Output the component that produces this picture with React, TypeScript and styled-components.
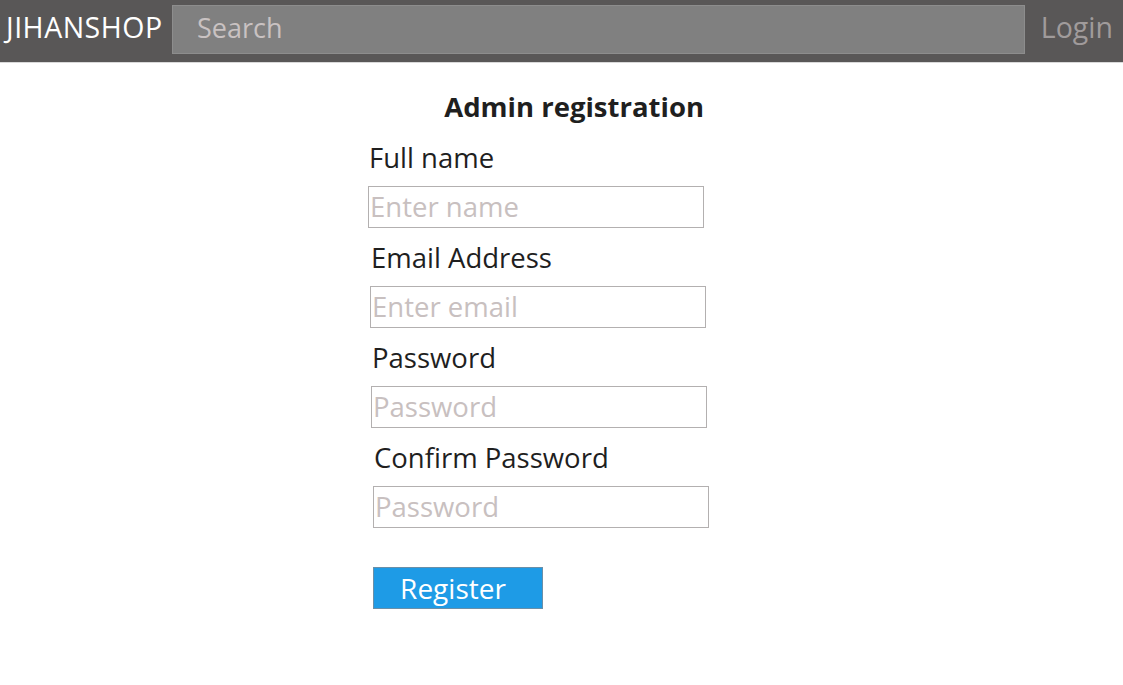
import React from "react";
import styled, { createGlobalStyle } from "styled-components";

const Global = createGlobalStyle`
  html, body { margin: 0; padding: 0; background: #fff; }
  body { font-family: "Open Sans", "Noto Sans", sans-serif; }
  * { box-sizing: border-box; }
`;

const Header = styled.header`
  display: flex;
  align-items: flex-start;
  height: 63px;
  background: #595757;
  border-bottom: 1px solid #d9d9d9;
  padding: 5px 10px 0 6px;
`;

const Logo = styled.div`
  color: #ffffff;
  font-size: 28.5px;
  line-height: 44px;
  letter-spacing: 0.5px;
  width: 166px;
  flex: none;
`;

const SearchBox = styled.input`
  flex: 1;
  height: 49px;
  background: #808080;
  border: 1px solid #8d8d8d;
  padding: 0 24px 5px;
  font-family: inherit;
  font-size: 27px;
  color: #eee;
  outline: none;
  &::placeholder { color: #c9c2c2; }
`;

const LoginLink = styled.div`
  color: #a09b9b;
  font-size: 28.5px;
  line-height: 44px;
  margin-left: 16px;
  flex: none;
`;

const Main = styled.main`
  display: flex;
  flex-direction: column;
  width: 342px;
  margin: 24px 0 0 368px;
`;

const Title = styled.h1`
  margin: 0 0 11px;
  width: 336px;
  text-align: right;
  font-size: 27.5px;
  line-height: 40px;
  font-weight: 700;
  color: #1f1f1f;
`;

const Group = styled.div<{ $shift: number }>`
  display: flex;
  flex-direction: column;
  margin-left: ${(p) => p.$shift}px;
  margin-bottom: 10px;
`;

const Label = styled.label`
  font-size: 27.5px;
  line-height: 40px;
  color: #1f1f1f;
  margin: 0 0 8px 1px;
`;

const Field = styled.input`
  width: 336px;
  height: 42px;
  border: 1px solid #b3b0b0;
  padding: 0 1px 2px;
  font-family: inherit;
  font-size: 27.5px;
  color: #222;
  outline: none;
  &::placeholder { color: #c8c0c0; }
`;

const Button = styled.button`
  margin: 29px 0 0 5px;
  width: 170px;
  height: 42px;
  background: #1e9be6;
  border: 1px solid #6a8fa8;
  color: #fff;
  font-family: inherit;
  font-size: 28px;
  padding: 0 10px 0 0;
  cursor: pointer;
`;

const fields = [
  { label: "Full name", placeholder: "Enter name", type: "text", shift: 0 },
  { label: "Email Address", placeholder: "Enter email", type: "email", shift: 2 },
  { label: "Password", placeholder: "Password", type: "password", shift: 3 },
  { label: "Confirm Password", placeholder: "Password", type: "password", shift: 5 },
];

export default function App() {
  return (
    <>
      <Global />
      <Header>
        <Logo>JIHANSHOP</Logo>
        <SearchBox placeholder="Search" />
        <LoginLink>Login</LoginLink>
      </Header>
      <Main>
        <Title>Admin registration</Title>
        {fields.map((f) => (
          <Group key={f.label + f.shift} $shift={f.shift}>
            <Label>{f.label}</Label>
            <Field type={f.type} placeholder={f.placeholder} />
          </Group>
        ))}
        <Button>Register</Button>
      </Main>
    </>
  );
}
